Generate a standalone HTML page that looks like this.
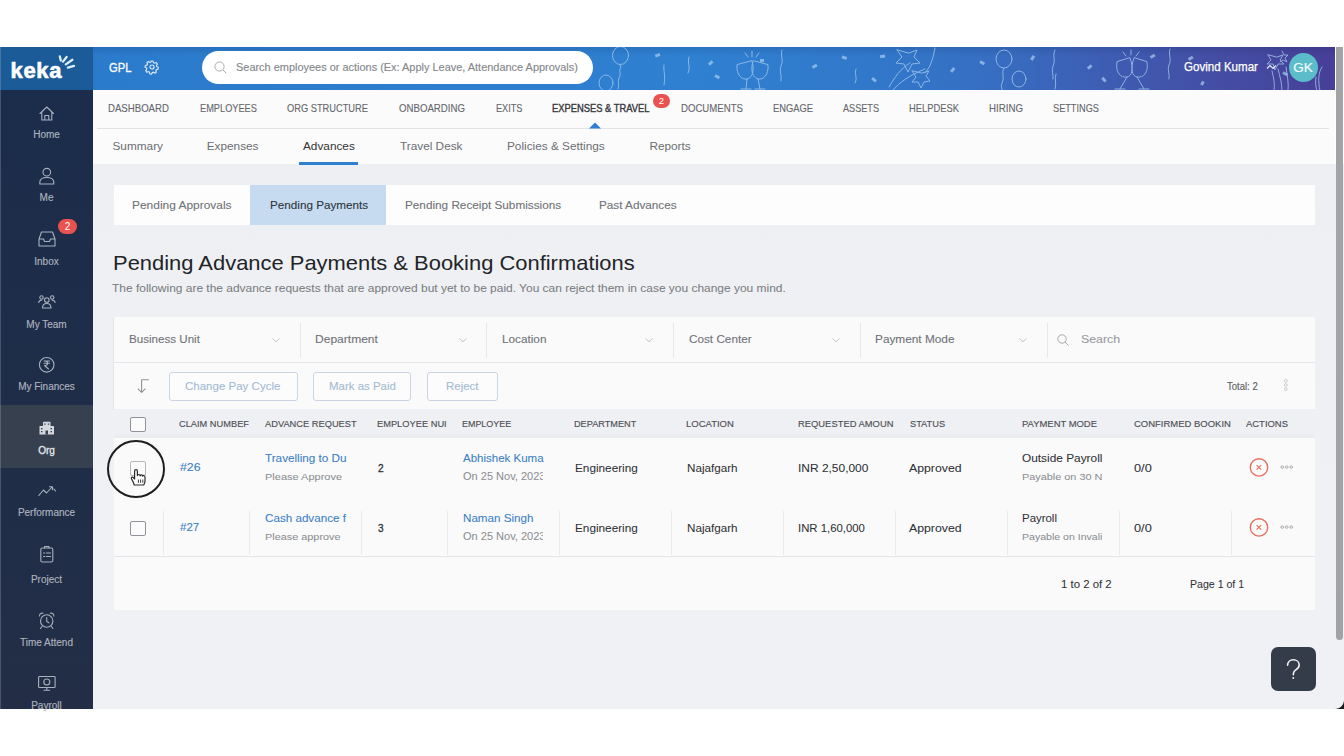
<!DOCTYPE html>
<html><head><meta charset="utf-8"><style>
*{margin:0;padding:0;box-sizing:border-box}
html,body{width:1344px;height:756px;overflow:hidden;background:#fff;font-family:"Liberation Sans",sans-serif;position:relative}
.a{position:absolute;white-space:nowrap}
svg{position:absolute;overflow:visible}
</style></head><body>
<div class="a" style="left:0px;top:47px;width:93px;height:43px;background:#1b5b97;"></div>
<div class="a" style="left:93px;top:47px;width:1241.5px;height:43px;background:linear-gradient(90deg,#2b7bcc 0%,#2f80d1 49%,#3276c9 65%,#376dc1 73%,#3d5eb4 81%,#4350a6 89%,#473f98 100%);"></div>
<div class="a" style="left:0px;top:90px;width:93px;height:619px;background:linear-gradient(180deg,#1b2d4b 0%,#1f2d48 50%,#232e46 100%);"></div>
<div class="a" style="left:93px;top:90px;width:1251px;height:619px;background:linear-gradient(180deg,#eceef2 0%,#eef0f3 30%,#f0f1f4 100%);"></div>
<div class="a" style="left:93px;top:90px;width:1251px;height:74px;background:#fbfbfc;"></div>
<div class="a" style="left:93px;top:47px;width:1241.5px;height:9px;background:linear-gradient(180deg,rgba(0,20,60,0.12),rgba(0,20,60,0));"></div>
<div class="a" style="left:97px;top:128px;width:1232px;height:1px;background:#e1e3e6;"></div>
<div class="a" style="left:1334.5px;top:47px;width:1.5px;height:117px;background:#ffffff;"></div>
<div class="a" style="left:1336px;top:47px;width:7px;height:592.5px;background:#a1a3a7;border-radius:0 0 3.5px 3.5px"></div>
<div class="a" style="left:1343px;top:47px;width:1px;height:117px;background:#ffffff;"></div>
<div class="a" style="left:10.5px;top:58px;font-size:22px;line-height:26px;font-weight:bold;color:#fff;letter-spacing:0.7px;-webkit-text-stroke:0.6px #fff">keka</div>
<svg style="left:0;top:0" width="93" height="91"><g stroke="#dbeefa" stroke-width="2.3" stroke-linecap="round"><path d="M59.8 56.3 L60.8 60.5 M63 61.6 L66.6 57 M65.8 64.4 L72.4 59.8 M67.9 67.6 L74 65.9"/></g></svg>
<svg style="left:144px;top:58.5px" width="16" height="16" viewBox="-1 -1 18 18"><g fill="none" stroke="#d7e6f5" stroke-width="1.3"><circle cx="8" cy="8" r="2.3"/><path d="M6.9 1.2 L9.1 1.2 L9.5 3 L10.9 3.7 L12.6 2.9 L14 4.6 L13 6.2 L13.4 7.6 L15 8.3 L14.8 10.5 L13 10.8 L12.3 12.1 L13 13.8 L11.3 15 L9.8 13.9 L8.3 14.3 L7.6 15.9 L5.4 15.6 L5.1 13.8 L3.8 13.1 L2.1 13.8 L1 12 L2.1 10.6 L1.8 9 L0.2 8.3 L0.5 6.2 L2.3 5.9 L3 4.6 L2.3 3 L4 1.8 L5.5 2.9 L6.8 2.5 Z"/></g></svg>
<svg style="left:0;top:47px;overflow:hidden" width="1334" height="43"><g fill="none" stroke="#a9cdef" stroke-width="1" stroke-linecap="round" stroke-linejoin="round" opacity="0.75"><ellipse cx="620.5" cy="8.5" rx="8" ry="9"/><path d="M620 17.5 L621 20 C618 24 622 27 619 31 C617 35 620 38 618 42"/><ellipse cx="606" cy="36" rx="7" ry="8"/><path d="M737 18 C736 28 742 33 747 32 C752 31 755 24 752 14 Z M747 32 L746 42 M741 42 L751 42"/><path d="M768 18 C769 28 763 33 758 32 C753 31 750 24 753 14 Z M758 32 L760 42 M755 42 L765 42"/><path d="M752 4 L752 10 M745 6 L748 10 M759 6 L756 10"/><path d="M897 3 L902 10 L896 16 L904 17 L908 25 L912 17 L920 16 L914 10 L917 3 L909 6 Z"/><path d="M912 24 L916 30 L912 35 L918 35 L921 41 L924 35 L930 34 L926 29 L929 24 L922 26 Z"/><path d="M889 40 C895 30 900 22 910 16 M893 43 C900 35 910 28 925 22 M935 1 C933 10 932 18 925 26"/><ellipse cx="1004" cy="12" rx="8" ry="9"/><path d="M1004 21 C1001 26 1005 30 1002 36 C1000 40 1003 42 1002 44"/><ellipse cx="1019" cy="32" rx="7" ry="8"/><path d="M1117 15 C1115 26 1121 31 1127 30 C1132 29 1134 22 1130 11 Z M1127 30 L1120 42 M1115 42 L1125 42"/><path d="M1147 15 C1149 26 1143 31 1137 30 C1132 29 1130 22 1134 11 Z M1137 30 L1144 42 M1139 42 L1149 42"/><path d="M1131 3 L1131 8 M1123 5 L1126 9 M1139 5 L1136 9"/><path d="M1268 8 L1271 13 L1267 17 L1273 17 L1275 23 L1278 17 L1284 17 L1280 13 L1283 8 L1277 10 Z"/><path d="M1282 4 L1284 8 L1288 8 L1285 11 L1287 15 L1283 13 L1280 15"/><path d="M1278 22 C1280 30 1282 36 1282 44 M1272 24 C1274 32 1275 38 1274 44 M1286 20 C1287 28 1289 36 1288 44"/><path d="M1322 20 C1318 26 1318 34 1320 44 M1316 30 C1315 36 1316 40 1317 44"/><path d="M782 3 C780 9 784 13 781 19 C779 24 782 28 781 34"/><path d="M689 10 C687 16 691 20 688 26"/><path d="M1055 3 C1052 9 1056 13 1053 19 C1051 24 1054 28 1053 32"/><path d="M1170 2 C1168 8 1172 12 1169 18 C1167 23 1170 27 1169 32"/><path d="M856 22 C854 28 858 30 855 36"/><path d="M1056 27 C1054 32 1057 36 1055 42"/><path d="M664 18 C663 24 666 28 664 38"/></g><g fill="#a9cdef" opacity="0.7"><rect x="655" y="7" width="5" height="3" transform="rotate(-20 657 8)"/><rect x="715" y="28" width="5" height="3" transform="rotate(30 717 29)"/><rect x="708" y="15" width="5" height="3" transform="rotate(-40 710 16)"/><rect x="842" y="9" width="5" height="3" transform="rotate(20 844 10)"/><rect x="812" y="18" width="5" height="3" transform="rotate(-30 814 19)"/><rect x="872" y="31" width="5" height="3" transform="rotate(40 874 32)"/><rect x="880" y="8" width="5" height="3" transform="rotate(-10 882 9)"/><rect x="950" y="22" width="5" height="3" transform="rotate(-50 952 23)"/><rect x="980" y="14" width="5" height="3" transform="rotate(30 982 15)"/><rect x="1030" y="10" width="5" height="3" transform="rotate(-60 1032 11)"/><rect x="1087" y="19" width="5" height="3" transform="rotate(-40 1089 20)"/><rect x="1102" y="31" width="5" height="3" transform="rotate(50 1104 32)"/><rect x="1150" y="8" width="5" height="3" transform="rotate(-30 1152 9)"/><rect x="1188" y="10" width="5" height="3" transform="rotate(-30 1190 11)"/><rect x="1200" y="35" width="4" height="3" transform="rotate(-60 1202 36)"/><rect x="1283" y="25" width="5" height="3" transform="rotate(30 1285 26)"/><rect x="760" y="12" width="4" height="3"/></g></svg>
<div class="a" style="left:108.6px;top:59.70px;font-size:13px;line-height:15.60px;color:#fff;font-weight:normal;transform:scaleX(0.8611);transform-origin:0 50%;-webkit-text-stroke:0.3px #fff;">GPL</div>
<div class="a" style="left:1183.7px;top:59.82px;font-size:12.3px;line-height:14.76px;color:#fff;font-weight:normal;transform:scaleX(0.9412);transform-origin:0 50%;-webkit-text-stroke:0.25px #fff;">Govind Kumar</div>
<div class="a" style="left:1288.5px;top:52.5px;width:29px;height:29px;border-radius:50%;background:#5bbdc9;color:#f4fbfc;font-size:13.5px;line-height:29px;text-align:center;-webkit-text-stroke:0.2px #f4fbfc">GK</div>
<div class="a" style="left:202px;top:51px;width:391px;height:33px;border-radius:17px;background:#fff"></div>
<div class="a" style="left:235.9px;top:60.72px;font-size:11.3px;line-height:13.56px;color:#85888c;font-weight:normal;transform:scaleX(0.9688);transform-origin:0 50%;-webkit-text-stroke:0.15px #85888c;">Search employees or actions (Ex: Apply Leave, Attendance Approvals)</div>
<svg style="left:214px;top:61px" width="14" height="14"><g fill="none" stroke="#a9abae" stroke-width="1"><circle cx="5.5" cy="5.5" r="4.6"/><path d="M8.8 8.8 L12.3 12.3"/></g></svg>
<svg style="left:1266px;top:63px" width="12" height="8"><path d="M1 5.5 L4 2.5 L7 5.5 L10 2.5" fill="none" stroke="#e6ecf5" stroke-width="1.1"/></svg>
<div class="a" style="left:108px;top:101.58px;font-size:10.7px;line-height:12.84px;color:#66686c;font-weight:normal;transform:scaleX(0.9000);transform-origin:0 50%;-webkit-text-stroke:0.12px #66686c;">DASHBOARD</div>
<div class="a" style="left:200px;top:101.58px;font-size:10.7px;line-height:12.84px;color:#66686c;font-weight:normal;transform:scaleX(0.8635);transform-origin:0 50%;-webkit-text-stroke:0.12px #66686c;">EMPLOYEES</div>
<div class="a" style="left:287px;top:101.58px;font-size:10.7px;line-height:12.84px;color:#66686c;font-weight:normal;transform:scaleX(0.8679);transform-origin:0 50%;-webkit-text-stroke:0.12px #66686c;">ORG STRUCTURE</div>
<div class="a" style="left:398.5px;top:101.58px;font-size:10.7px;line-height:12.84px;color:#66686c;font-weight:normal;transform:scaleX(0.9026);transform-origin:0 50%;-webkit-text-stroke:0.12px #66686c;">ONBOARDING</div>
<div class="a" style="left:495.5px;top:101.58px;font-size:10.7px;line-height:12.84px;color:#66686c;font-weight:normal;transform:scaleX(0.8570);transform-origin:0 50%;-webkit-text-stroke:0.12px #66686c;">EXITS</div>
<div class="a" style="left:552px;top:101.58px;font-size:10.7px;line-height:12.84px;color:#38393c;font-weight:normal;transform:scaleX(0.8760);transform-origin:0 50%;-webkit-text-stroke:0.4px #38393c;">EXPENSES &amp; TRAVEL</div>
<div class="a" style="left:680.6px;top:101.58px;font-size:10.7px;line-height:12.84px;color:#66686c;font-weight:normal;transform:scaleX(0.8991);transform-origin:0 50%;-webkit-text-stroke:0.12px #66686c;">DOCUMENTS</div>
<div class="a" style="left:773px;top:101.58px;font-size:10.7px;line-height:12.84px;color:#66686c;font-weight:normal;transform:scaleX(0.8737);transform-origin:0 50%;-webkit-text-stroke:0.12px #66686c;">ENGAGE</div>
<div class="a" style="left:843px;top:101.58px;font-size:10.7px;line-height:12.84px;color:#66686c;font-weight:normal;transform:scaleX(0.8526);transform-origin:0 50%;-webkit-text-stroke:0.12px #66686c;">ASSETS</div>
<div class="a" style="left:909px;top:101.58px;font-size:10.7px;line-height:12.84px;color:#66686c;font-weight:normal;transform:scaleX(0.8758);transform-origin:0 50%;-webkit-text-stroke:0.12px #66686c;">HELPDESK</div>
<div class="a" style="left:989px;top:101.58px;font-size:10.7px;line-height:12.84px;color:#66686c;font-weight:normal;transform:scaleX(0.9079);transform-origin:0 50%;-webkit-text-stroke:0.12px #66686c;">HIRING</div>
<div class="a" style="left:1053px;top:101.58px;font-size:10.7px;line-height:12.84px;color:#66686c;font-weight:normal;transform:scaleX(0.8597);transform-origin:0 50%;-webkit-text-stroke:0.12px #66686c;">SETTINGS</div>
<div class="a" style="left:653px;top:94px;width:17px;height:14px;border-radius:7px;background:#e9524e;color:#fff;font-size:9.5px;line-height:14px;text-align:center">2</div>
<svg style="left:589px;top:122px" width="12" height="7"><path d="M0 6.5 L6 0.5 L12 6.5 Z" fill="#2f7fd0"/></svg>
<div class="a" style="left:112.5px;top:138.92px;font-size:11.8px;line-height:14.16px;color:#6b6e72;font-weight:normal;">Summary</div>
<div class="a" style="left:206.7px;top:138.92px;font-size:11.8px;line-height:14.16px;color:#6b6e72;font-weight:normal;">Expenses</div>
<div class="a" style="left:303px;top:138.92px;font-size:11.8px;line-height:14.16px;color:#333;font-weight:normal;">Advances</div>
<div class="a" style="left:400px;top:138.92px;font-size:11.8px;line-height:14.16px;color:#6b6e72;font-weight:normal;">Travel Desk</div>
<div class="a" style="left:507px;top:138.92px;font-size:11.8px;line-height:14.16px;color:#6b6e72;font-weight:normal;">Policies &amp; Settings</div>
<div class="a" style="left:649.4px;top:138.92px;font-size:11.8px;line-height:14.16px;color:#6b6e72;font-weight:normal;">Reports</div>
<div class="a" style="left:299px;top:162px;width:59px;height:3px;background:#2f7fd0;"></div>
<div class="a" style="left:0px;top:405px;width:93px;height:63px;background:#36404f;"></div>
<div class="a" style="left:0px;top:129.00px;font-size:10px;line-height:12.00px;color:#adb3be;font-weight:normal;width:93px;text-align:center;-webkit-text-stroke:0.15px #adb3be">Home</div>
<div class="a" style="left:0px;top:192.30px;font-size:10px;line-height:12.00px;color:#adb3be;font-weight:normal;width:93px;text-align:center;-webkit-text-stroke:0.15px #adb3be">Me</div>
<div class="a" style="left:0px;top:255.50px;font-size:10px;line-height:12.00px;color:#adb3be;font-weight:normal;width:93px;text-align:center;-webkit-text-stroke:0.15px #adb3be">Inbox</div>
<div class="a" style="left:0px;top:318.50px;font-size:10px;line-height:12.00px;color:#adb3be;font-weight:normal;width:93px;text-align:center;-webkit-text-stroke:0.15px #adb3be">My Team</div>
<div class="a" style="left:0px;top:381.20px;font-size:10px;line-height:12.00px;color:#adb3be;font-weight:normal;width:93px;text-align:center;-webkit-text-stroke:0.15px #adb3be">My Finances</div>
<div class="a" style="left:0px;top:444.50px;font-size:10px;line-height:12.00px;color:#e4e7ec;font-weight:normal;width:93px;text-align:center;-webkit-text-stroke:0.3px #e4e7ec">Org</div>
<div class="a" style="left:0px;top:507.40px;font-size:10px;line-height:12.00px;color:#adb3be;font-weight:normal;width:93px;text-align:center;-webkit-text-stroke:0.15px #adb3be">Performance</div>
<div class="a" style="left:0px;top:574.20px;font-size:10px;line-height:12.00px;color:#adb3be;font-weight:normal;width:93px;text-align:center;-webkit-text-stroke:0.15px #adb3be">Project</div>
<div class="a" style="left:0px;top:637.00px;font-size:10px;line-height:12.00px;color:#adb3be;font-weight:normal;width:93px;text-align:center;-webkit-text-stroke:0.15px #adb3be">Time Attend</div>
<div class="a" style="left:0px;top:700.00px;font-size:10px;line-height:12.00px;color:#adb3be;font-weight:normal;width:93px;text-align:center;-webkit-text-stroke:0.15px #adb3be">Payroll</div>
<svg style="left:0;top:0" width="93" height="709"><g fill="none" stroke="#a9b1bd" stroke-width="1.1" stroke-linecap="round" stroke-linejoin="round"><path d="M40 113.5 L46.8 107 L53.5 113.5 M41.8 112 L41.8 120 L51.8 120 L51.8 112 M44.8 120 L44.8 115.5 L48.8 115.5 L48.8 120"/><circle cx="46.8" cy="172.2" r="3.8"/><path d="M39.8 184 L39.8 182.5 C39.8 178.8 43 177.5 46.8 177.5 C50.6 177.5 53.8 178.8 53.8 182.5 L53.8 184 Z"/><path d="M41.5 232 L52.5 232 L55 239 L55 246 L39 246 L39 239 Z M39 239 L43.5 239 L44.5 241.5 L49.5 241.5 L50.5 239 L55 239"/><circle cx="46.8" cy="300" r="2.3"/><path d="M42.5 308 C42.5 304.5 44.5 303.5 46.8 303.5 C49.1 303.5 51 304.5 51 308 Z"/><circle cx="41.5" cy="297.5" r="1.7"/><path d="M38.8 302.5 C38.8 300.8 40 300.2 41.5 300.2"/><circle cx="52.2" cy="297.5" r="1.7"/><path d="M55 302.5 C55 300.8 53.8 300.2 52.2 300.2"/><circle cx="46.7" cy="364.8" r="7.3"/><path d="M44 361 L49.5 361 M44 363.2 L49.5 363.2 M45 361 C48.5 361 48.5 365.5 45 365.5 L44.5 365.5 L48.5 369"/><path d="M38.8 495.5 L43.5 490 L46.5 493 L52 487 M49.5 486.8 L52.5 486.8 L52.5 489.8"/><path d="M54 489 L55.5 491"/><rect x="40.8" y="548" width="12" height="14" rx="1.5"/><path d="M44.5 548 L44.5 546.5 L49 546.5 L49 548 M43.5 553 L44.8 553 M46.5 553 L50.5 553 M43.5 556.5 L44.8 556.5 M46.5 556.5 L50.5 556.5"/><circle cx="46.7" cy="621" r="6.2"/><path d="M46.7 617.5 L46.7 621.5 L49 622.8 M39.5 616 C39.5 613.5 41.5 612.7 43 613.3 M53.9 616 C53.9 613.5 51.9 612.7 50.4 613.3 M42 626.5 L40.5 628.5 M51.4 626.5 L52.9 628.5"/><rect x="38.6" y="676.5" width="16.5" height="11" rx="0.8"/><circle cx="46.8" cy="682" r="3"/><path d="M44 690.3 L49.6 690.3 M46.8 687.5 L46.8 690.3"/></g><g fill="#d5d9df"><rect x="39.5" y="426" width="14.5" height="8.5" rx="0.6"/><rect x="43" y="421.8" width="7.5" height="5" rx="0.6"/></g><g fill="#36404f"><rect x="44.2" y="423.5" width="1.4" height="1.2"/><rect x="47.8" y="423.5" width="1.4" height="1.2"/><rect x="41" y="428" width="1.5" height="1.3"/><rect x="50.5" y="428" width="1.5" height="1.3"/><rect x="41" y="431" width="1.5" height="1.3"/><rect x="50.5" y="431" width="1.5" height="1.3"/><rect x="45.5" y="430.5" width="2.5" height="4"/></g></svg>
<div class="a" style="left:58px;top:219px;width:19px;height:15px;border-radius:8px;background:#e9524e;color:#fff;font-size:10px;line-height:15px;text-align:center">2</div>
<div class="a" style="left:114px;top:185px;width:1201px;height:40px;background:#fdfdfd;"></div>
<div class="a" style="left:250px;top:185px;width:136px;height:40px;background:#c6dbef;"></div>
<div class="a" style="left:132px;top:198.53px;font-size:11.59px;line-height:13.91px;color:#707377;transform:scaleX(1.0313);transform-origin:0 50%;-webkit-text-stroke:0.1px #707377;">Pending Approvals</div>
<div class="a" style="left:269.6px;top:198.53px;font-size:11.59px;line-height:13.91px;color:#2c3440;transform:scaleX(1.0102);transform-origin:0 50%;-webkit-text-stroke:0.1px #2c3440;">Pending Payments</div>
<div class="a" style="left:404.9px;top:198.53px;font-size:11.59px;line-height:13.91px;color:#707377;transform:scaleX(1.0149);transform-origin:0 50%;-webkit-text-stroke:0.1px #707377;">Pending Receipt Submissions</div>
<div class="a" style="left:599.1px;top:198.53px;font-size:11.59px;line-height:13.91px;color:#707377;transform:scaleX(1.0132);transform-origin:0 50%;-webkit-text-stroke:0.1px #707377;">Past Advances</div>
<div class="a" style="left:112.8px;top:250.17px;font-size:20.95px;line-height:25.14px;color:#222428;transform:scaleX(1.0473);transform-origin:0 50%;">Pending Advance Payments &amp; Booking Confirmations</div>
<div class="a" style="left:112px;top:282.03px;font-size:11.59px;line-height:13.91px;color:#7a7d81;transform:scaleX(1.0324);transform-origin:0 50%;-webkit-text-stroke:0.05px #7a7d81;">The following are the advance requests that are approved but yet to be paid. You can reject them in case you change you mind.</div>
<div class="a" style="left:114px;top:317px;width:1201px;height:293px;background:#fafafb;"></div>
<div class="a" style="left:113px;top:317px;width:1px;height:93px;background:#e4e6e9;"></div>
<div class="a" style="left:114px;top:362px;width:1201px;height:1px;background:#e4e6e9;"></div>
<div class="a" style="left:129.4px;top:333.32px;font-size:11.17px;line-height:13.41px;color:#707377;transform:scaleX(1.0394);transform-origin:0 50%;-webkit-text-stroke:0.1px #707377;">Business Unit</div>
<div class="a" style="left:300px;top:323px;width:1px;height:35px;background:#e6e8eb;"></div>
<svg style="left:271.8px;top:338px" width="8" height="5"><path d="M0.5 0.5 L4 3.8 L7.5 0.5" fill="none" stroke="#c3c6ca" stroke-width="1"/></svg>
<div class="a" style="left:315.2px;top:333.32px;font-size:11.17px;line-height:13.41px;color:#707377;transform:scaleX(1.0792);transform-origin:0 50%;-webkit-text-stroke:0.1px #707377;">Department</div>
<div class="a" style="left:486px;top:323px;width:1px;height:35px;background:#e6e8eb;"></div>
<svg style="left:458.5px;top:338px" width="8" height="5"><path d="M0.5 0.5 L4 3.8 L7.5 0.5" fill="none" stroke="#c3c6ca" stroke-width="1"/></svg>
<div class="a" style="left:502.4px;top:333.32px;font-size:11.17px;line-height:13.41px;color:#707377;transform:scaleX(1.0534);transform-origin:0 50%;-webkit-text-stroke:0.1px #707377;">Location</div>
<div class="a" style="left:673px;top:323px;width:1px;height:35px;background:#e6e8eb;"></div>
<svg style="left:645.2px;top:338px" width="8" height="5"><path d="M0.5 0.5 L4 3.8 L7.5 0.5" fill="none" stroke="#c3c6ca" stroke-width="1"/></svg>
<div class="a" style="left:689.2px;top:333.32px;font-size:11.17px;line-height:13.41px;color:#707377;transform:scaleX(1.0517);transform-origin:0 50%;-webkit-text-stroke:0.1px #707377;">Cost Center</div>
<div class="a" style="left:860px;top:323px;width:1px;height:35px;background:#e6e8eb;"></div>
<svg style="left:831.9px;top:338px" width="8" height="5"><path d="M0.5 0.5 L4 3.8 L7.5 0.5" fill="none" stroke="#c3c6ca" stroke-width="1"/></svg>
<div class="a" style="left:875.4px;top:333.32px;font-size:11.17px;line-height:13.41px;color:#707377;transform:scaleX(1.0592);transform-origin:0 50%;-webkit-text-stroke:0.1px #707377;">Payment Mode</div>
<div class="a" style="left:1047px;top:323px;width:1px;height:35px;background:#e6e8eb;"></div>
<svg style="left:1018.6px;top:338px" width="8" height="5"><path d="M0.5 0.5 L4 3.8 L7.5 0.5" fill="none" stroke="#c3c6ca" stroke-width="1"/></svg>
<svg style="left:1057px;top:334px" width="12" height="12"><circle cx="5" cy="5" r="4.2" fill="none" stroke="#a6a9ad" stroke-width="1"/><path d="M8 8 L11.5 11.5" stroke="#a6a9ad" stroke-width="1"/></svg>
<div class="a" style="left:1081px;top:333.32px;font-size:11.17px;line-height:13.41px;color:#9a9da1;transform:scaleX(1.1072);transform-origin:0 50%;-webkit-text-stroke:0.15px #9a9da1;">Search</div>
<svg style="left:0;top:0" width="200" height="400"><path d="M148.8 379.8 L141.6 379.8 L141.6 392.4 M137.8 388.6 L141.6 392.4 L145.4 388.6" fill="none" stroke="#909397" stroke-width="1.1" stroke-linejoin="round"/></svg>
<div class="a" style="left:169.2px;top:371.5px;width:128.6px;height:29.5px;border:1px solid #c9d5e2;border-radius:3px;background:#fcfcfd"></div>
<div class="a" style="left:185.3px;top:379.92px;font-size:11.17px;line-height:13.41px;color:#a3bbd3;transform:scaleX(1.0320);transform-origin:0 50%;-webkit-text-stroke:0.1px #a3bbd3;">Change Pay Cycle</div>
<div class="a" style="left:312.5px;top:371.5px;width:98.8px;height:29.5px;border:1px solid #c9d5e2;border-radius:3px;background:#fcfcfd"></div>
<div class="a" style="left:328.5px;top:379.92px;font-size:11.17px;line-height:13.41px;color:#a3bbd3;transform:scaleX(1.0276);transform-origin:0 50%;-webkit-text-stroke:0.1px #a3bbd3;">Mark as Paid</div>
<div class="a" style="left:427px;top:371.5px;width:70.7px;height:29.5px;border:1px solid #c9d5e2;border-radius:3px;background:#fcfcfd"></div>
<div class="a" style="left:446px;top:379.92px;font-size:11.17px;line-height:13.41px;color:#a3bbd3;transform:scaleX(1.0262);transform-origin:0 50%;-webkit-text-stroke:0.1px #a3bbd3;">Reject</div>
<div class="a" style="left:1227.3px;top:380.58px;font-size:10.06px;line-height:12.07px;color:#5c5f63;transform:scaleX(0.9469);transform-origin:0 50%;-webkit-text-stroke:0.15px #5c5f63;">Total: 2</div>
<svg style="left:0;top:0" width="1300" height="400"><g fill="none" stroke="#bfc2c5" stroke-width="0.8"><circle cx="1285.8" cy="380.8" r="1.4"/><circle cx="1285.8" cy="385" r="1.4"/><circle cx="1285.8" cy="389.2" r="1.4"/></g></svg>
<div class="a" style="left:114px;top:409px;width:1201px;height:29px;background:linear-gradient(180deg,#eff0f3 0%,#eff0f3 80%,#e9ebee 100%);"></div>
<div class="a" style="left:130px;top:416.5px;width:15.5px;height:15.5px;border:1.2px solid #909399;border-radius:2px;background:#fbfbfc"></div>
<div class="a" style="left:179.4px;top:419.34px;font-size:8.52px;line-height:10.22px;color:#4b4e53;transform:scaleX(1.0873);transform-origin:0 50%;-webkit-text-stroke:0.12px #4b4e53;">CLAIM NUMBEF</div>
<div class="a" style="left:265px;top:419.34px;font-size:8.52px;line-height:10.22px;color:#4b4e53;transform:scaleX(1.0903);transform-origin:0 50%;-webkit-text-stroke:0.12px #4b4e53;">ADVANCE REQUEST</div>
<div class="a" style="left:376.8px;top:419.34px;font-size:8.52px;line-height:10.22px;color:#4b4e53;transform:scaleX(1.0905);transform-origin:0 50%;-webkit-text-stroke:0.12px #4b4e53;">EMPLOYEE NUI</div>
<div class="a" style="left:461.5px;top:419.34px;font-size:8.52px;line-height:10.22px;color:#4b4e53;transform:scaleX(1.0496);transform-origin:0 50%;-webkit-text-stroke:0.12px #4b4e53;">EMPLOYEE</div>
<div class="a" style="left:574.1px;top:419.34px;font-size:8.52px;line-height:10.22px;color:#4b4e53;transform:scaleX(1.0758);transform-origin:0 50%;-webkit-text-stroke:0.12px #4b4e53;">DEPARTMENT</div>
<div class="a" style="left:685.6px;top:419.34px;font-size:8.52px;line-height:10.22px;color:#4b4e53;transform:scaleX(1.1161);transform-origin:0 50%;-webkit-text-stroke:0.12px #4b4e53;">LOCATION</div>
<div class="a" style="left:797.7px;top:419.34px;font-size:8.52px;line-height:10.22px;color:#4b4e53;transform:scaleX(1.1024);transform-origin:0 50%;-webkit-text-stroke:0.12px #4b4e53;">REQUESTED AMOUN</div>
<div class="a" style="left:909.9px;top:419.34px;font-size:8.52px;line-height:10.22px;color:#4b4e53;transform:scaleX(1.0852);transform-origin:0 50%;-webkit-text-stroke:0.12px #4b4e53;">STATUS</div>
<div class="a" style="left:1022px;top:419.34px;font-size:8.52px;line-height:10.22px;color:#4b4e53;transform:scaleX(1.1079);transform-origin:0 50%;-webkit-text-stroke:0.12px #4b4e53;">PAYMENT MODE</div>
<div class="a" style="left:1133.7px;top:419.34px;font-size:8.52px;line-height:10.22px;color:#4b4e53;transform:scaleX(1.1126);transform-origin:0 50%;-webkit-text-stroke:0.12px #4b4e53;">CONFIRMED BOOKIN</div>
<div class="a" style="left:1245.7px;top:419.34px;font-size:8.52px;line-height:10.22px;color:#4b4e53;transform:scaleX(1.1091);transform-origin:0 50%;-webkit-text-stroke:0.12px #4b4e53;">ACTIONS</div>
<div class="a" style="left:130.2px;top:460.5px;width:15.5px;height:15.5px;border:1.2px solid #b4b7bb;border-radius:2px;background:#fbfbfc"></div>
<div class="a" style="left:179.6px;top:461.29px;font-size:11.31px;line-height:13.58px;color:#3b7fc4;transform:scaleX(1.0914);transform-origin:0 50%;-webkit-text-stroke:0.1px #3b7fc4;">#26</div>
<div class="a" style="left:265.2px;top:451.93px;font-size:11.59px;line-height:13.91px;color:#3b7fc4;transform:scaleX(1.0117);transform-origin:0 50%;-webkit-text-stroke:0.08px #3b7fc4;">Travelling to Du</div>
<div class="a" style="left:265.2px;top:471.11px;font-size:9.92px;line-height:11.90px;color:#8b8e92;transform:scaleX(1.1114);transform-origin:0 50%;-webkit-text-stroke:0.05px #8b8e92;">Please Approve</div>
<div class="a" style="left:377.8px;top:462.42px;font-size:10.75px;line-height:12.91px;color:#2e3034;transform:scaleX(0.9363);transform-origin:0 50%;-webkit-text-stroke:0.3px #2e3034;">2</div>
<div class="a" style="left:462.6px;top:452.03px;font-size:11.59px;line-height:13.91px;color:#3b7fc4;transform:scaleX(0.9939);transform-origin:0 50%;-webkit-text-stroke:0.08px #3b7fc4;">Abhishek Kuma</div>
<div class="a" style="left:462.6px;top:470.89px;font-size:10.47px;line-height:12.57px;color:#8b8e92;transform:scaleX(1.0520);transform-origin:0 50%;-webkit-text-stroke:0.05px #8b8e92;clip-path:inset(-5px 2.5px -5px -5px)">On 25 Nov, 2023</div>
<div class="a" style="left:574.7px;top:461.82px;font-size:11.17px;line-height:13.41px;color:#2e3034;transform:scaleX(1.0547);transform-origin:0 50%;-webkit-text-stroke:0.05px #2e3034;">Engineering</div>
<div class="a" style="left:686.5px;top:461.82px;font-size:11.17px;line-height:13.41px;color:#2e3034;transform:scaleX(1.0444);transform-origin:0 50%;-webkit-text-stroke:0.05px #2e3034;">Najafgarh</div>
<div class="a" style="left:798.2px;top:461.82px;font-size:11.17px;line-height:13.41px;color:#2e3034;transform:scaleX(1.0708);transform-origin:0 50%;-webkit-text-stroke:0.05px #2e3034;">INR 2,50,000</div>
<div class="a" style="left:909.4px;top:461.82px;font-size:11.17px;line-height:13.41px;color:#2e3034;transform:scaleX(1.1018);transform-origin:0 50%;-webkit-text-stroke:0.05px #2e3034;">Approved</div>
<div class="a" style="left:1022px;top:451.93px;font-size:11.59px;line-height:13.91px;color:#2e3034;transform:scaleX(1.0241);transform-origin:0 50%;-webkit-text-stroke:0.05px #2e3034;">Outside Payroll</div>
<div class="a" style="left:1022px;top:471.11px;font-size:9.92px;line-height:11.90px;color:#8b8e92;transform:scaleX(1.0979);transform-origin:0 50%;-webkit-text-stroke:0.05px #8b8e92;">Payable on 30 N</div>
<div class="a" style="left:1133.6px;top:461.92px;font-size:11.17px;line-height:13.41px;color:#2e3034;transform:scaleX(1.1460);transform-origin:0 50%;-webkit-text-stroke:0.05px #2e3034;">0/0</div>
<svg style="left:1249px;top:457.5px" width="20" height="20"><circle cx="10" cy="9.4" r="8.7" fill="none" stroke="#e5705f" stroke-width="1.4"/><path d="M7.6 7.1 L12.2 11.6 M12.2 7.1 L7.6 11.6" stroke="#e5705f" stroke-width="1.2"/></svg>
<svg style="left:1280px;top:465px" width="14" height="4"><g fill="#f4f4f5" stroke="#a3a5a8" stroke-width="0.9"><ellipse cx="2.2" cy="2.1" rx="1.4" ry="1.2"/><ellipse cx="6.7" cy="2.1" rx="1.4" ry="1.2"/><ellipse cx="11.2" cy="2.1" rx="1.4" ry="1.2"/></g></svg>
<div class="a" style="left:163px;top:511px;width:1px;height:44px;background:#e8eaed;"></div>
<div class="a" style="left:249px;top:511px;width:1px;height:44px;background:#e8eaed;"></div>
<div class="a" style="left:361px;top:511px;width:1px;height:44px;background:#e8eaed;"></div>
<div class="a" style="left:447px;top:511px;width:1px;height:44px;background:#e8eaed;"></div>
<div class="a" style="left:559px;top:511px;width:1px;height:44px;background:#e8eaed;"></div>
<div class="a" style="left:671px;top:511px;width:1px;height:44px;background:#e8eaed;"></div>
<div class="a" style="left:783px;top:511px;width:1px;height:44px;background:#e8eaed;"></div>
<div class="a" style="left:895px;top:511px;width:1px;height:44px;background:#e8eaed;"></div>
<div class="a" style="left:1007px;top:511px;width:1px;height:44px;background:#e8eaed;"></div>
<div class="a" style="left:1119px;top:511px;width:1px;height:44px;background:#e8eaed;"></div>
<div class="a" style="left:1231px;top:511px;width:1px;height:44px;background:#e8eaed;"></div>
<div class="a" style="left:130.2px;top:520.5px;width:15.5px;height:15.5px;border:1.2px solid #909399;border-radius:2px;background:#fbfbfc"></div>
<div class="a" style="left:179.6px;top:521.29px;font-size:11.31px;line-height:13.58px;color:#3b7fc4;transform:scaleX(1.0225);transform-origin:0 50%;-webkit-text-stroke:0.1px #3b7fc4;">#27</div>
<div class="a" style="left:265.2px;top:511.93px;font-size:11.59px;line-height:13.91px;color:#3b7fc4;transform:scaleX(1.0056);transform-origin:0 50%;-webkit-text-stroke:0.08px #3b7fc4;">Cash advance f</div>
<div class="a" style="left:265.2px;top:531.11px;font-size:9.92px;line-height:11.90px;color:#8b8e92;transform:scaleX(1.0970);transform-origin:0 50%;-webkit-text-stroke:0.05px #8b8e92;">Please approve</div>
<div class="a" style="left:377.8px;top:522.42px;font-size:10.75px;line-height:12.91px;color:#2e3034;transform:scaleX(0.9363);transform-origin:0 50%;-webkit-text-stroke:0.3px #2e3034;">3</div>
<div class="a" style="left:462.6px;top:512.03px;font-size:11.59px;line-height:13.91px;color:#3b7fc4;transform:scaleX(1.0037);transform-origin:0 50%;-webkit-text-stroke:0.08px #3b7fc4;">Naman Singh</div>
<div class="a" style="left:462.6px;top:530.89px;font-size:10.47px;line-height:12.57px;color:#8b8e92;transform:scaleX(1.0520);transform-origin:0 50%;-webkit-text-stroke:0.05px #8b8e92;clip-path:inset(-5px 2.5px -5px -5px)">On 25 Nov, 2023</div>
<div class="a" style="left:574.7px;top:521.82px;font-size:11.17px;line-height:13.41px;color:#2e3034;transform:scaleX(1.0547);transform-origin:0 50%;-webkit-text-stroke:0.05px #2e3034;">Engineering</div>
<div class="a" style="left:686.5px;top:521.82px;font-size:11.17px;line-height:13.41px;color:#2e3034;transform:scaleX(1.0444);transform-origin:0 50%;-webkit-text-stroke:0.05px #2e3034;">Najafgarh</div>
<div class="a" style="left:798.2px;top:521.82px;font-size:11.17px;line-height:13.41px;color:#2e3034;transform:scaleX(1.0176);transform-origin:0 50%;-webkit-text-stroke:0.05px #2e3034;">INR 1,60,000</div>
<div class="a" style="left:909.4px;top:521.82px;font-size:11.17px;line-height:13.41px;color:#2e3034;transform:scaleX(1.1018);transform-origin:0 50%;-webkit-text-stroke:0.05px #2e3034;">Approved</div>
<div class="a" style="left:1022px;top:511.93px;font-size:11.59px;line-height:13.91px;color:#2e3034;transform:scaleX(0.9877);transform-origin:0 50%;-webkit-text-stroke:0.05px #2e3034;">Payroll</div>
<div class="a" style="left:1022px;top:531.11px;font-size:9.92px;line-height:11.90px;color:#8b8e92;transform:scaleX(1.0659);transform-origin:0 50%;-webkit-text-stroke:0.05px #8b8e92;">Payable on Invali</div>
<div class="a" style="left:1133.6px;top:521.92px;font-size:11.17px;line-height:13.41px;color:#2e3034;transform:scaleX(1.1460);transform-origin:0 50%;-webkit-text-stroke:0.05px #2e3034;">0/0</div>
<svg style="left:1249px;top:517.5px" width="20" height="20"><circle cx="10" cy="9.4" r="8.7" fill="none" stroke="#e5705f" stroke-width="1.4"/><path d="M7.6 7.1 L12.2 11.6 M12.2 7.1 L7.6 11.6" stroke="#e5705f" stroke-width="1.2"/></svg>
<svg style="left:1280px;top:525px" width="14" height="4"><g fill="#f4f4f5" stroke="#a3a5a8" stroke-width="0.9"><ellipse cx="2.2" cy="2.1" rx="1.4" ry="1.2"/><ellipse cx="6.7" cy="2.1" rx="1.4" ry="1.2"/><ellipse cx="11.2" cy="2.1" rx="1.4" ry="1.2"/></g></svg>
<div class="a" style="left:114px;top:556px;width:1201px;height:1px;background:#e3e5e8;"></div>
<div class="a" style="left:1060.9px;top:578.09px;font-size:10.89px;line-height:13.07px;color:#2e3034;transform:scaleX(1.0484);transform-origin:0 50%;-webkit-text-stroke:0.05px #2e3034;">1 to 2 of 2</div>
<div class="a" style="left:1189.5px;top:578.09px;font-size:10.89px;line-height:13.07px;color:#2e3034;transform:scaleX(0.9726);transform-origin:0 50%;-webkit-text-stroke:0.05px #2e3034;">Page 1 of 1</div>
<div class="a" style="left:107.3px;top:440.3px;width:58px;height:58px;border:2px solid #1e1e1e;border-radius:50%"></div>
<svg style="left:0;top:0" width="200" height="500"><path d="M134.2 485 C133.5 482 132.5 480.5 131.6 479 C131 477.9 131.5 476.9 132.6 477.1 C133.4 477.3 134 478.2 134.6 479 L134.6 471.2 C134.6 470.2 135.2 469.6 136 469.6 C136.8 469.6 137.4 470.2 137.4 471.2 L137.4 475.6 C137.6 474.8 138.2 474.5 138.8 474.5 C139.5 474.5 140 475 140.1 475.8 C140.3 475.1 140.8 474.9 141.4 474.9 C142.1 474.9 142.6 475.4 142.7 476.2 C142.9 475.6 143.4 475.4 143.9 475.5 C144.6 475.6 145 476.2 145 477 L145 481 C145 482.8 144.3 484 143.7 485 Z" fill="#fff" stroke="#2a2a2a" stroke-width="1.2" stroke-linejoin="round"/><path d="M138.4 479.5 L138.4 482.8 M140.6 479.5 L140.6 482.8 M142.8 479.5 L142.8 482.8" stroke="#2a2a2a" stroke-width="0.9"/></svg>
<div class="a" style="left:0px;top:47px;width:1px;height:662px;background:rgba(190,200,225,0.25);"></div>
<svg style="left:0;top:0" width="1344" height="756"><path d="M1344 700 L1344 709 L1335 709 C1340 709 1344 705 1344 700 Z" fill="#1a1a1a"/></svg>
<div class="a" style="left:1271px;top:647px;width:45px;height:44px;border-radius:7px;background:#343b49"></div>
<svg style="left:0;top:0" width="1344" height="756"><path d="M1287.6 665.3 C1287.6 661.8 1290.2 659.8 1293.3 659.8 C1296.6 659.8 1299.2 661.9 1299.2 665 C1299.2 668.2 1296.8 669.2 1294.9 670.6 C1293.6 671.6 1293.3 672.5 1293.3 674.8" fill="none" stroke="#f2f3f5" stroke-width="1.6" stroke-linecap="round"/><circle cx="1293.3" cy="678" r="0.9" fill="#f2f3f5"/></svg>
</body></html>
